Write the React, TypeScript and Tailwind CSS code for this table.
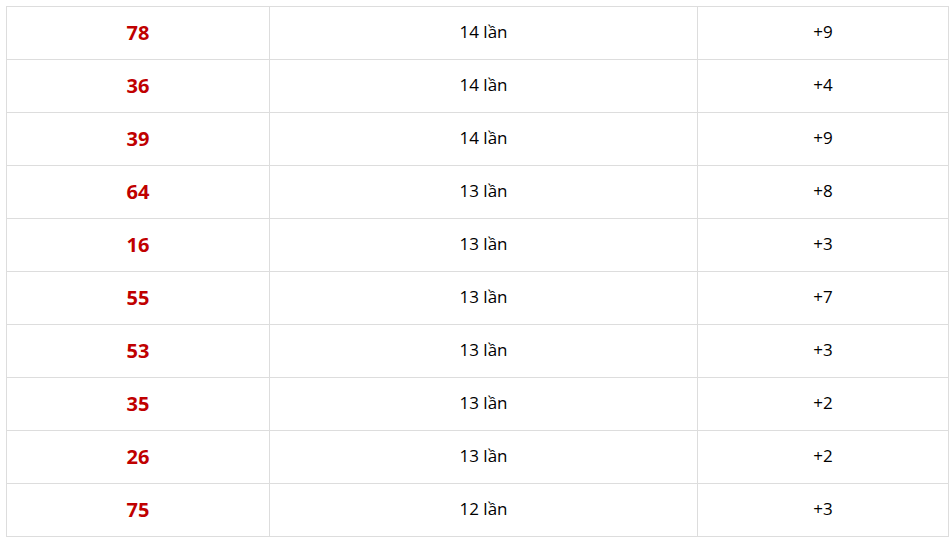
import React from "react";

const ROWS = [
  { num: "78", count: "14 lần", diff: "+9" },
  { num: "36", count: "14 lần", diff: "+4" },
  { num: "39", count: "14 lần", diff: "+9" },
  { num: "64", count: "13 lần", diff: "+8" },
  { num: "16", count: "13 lần", diff: "+3" },
  { num: "55", count: "13 lần", diff: "+7" },
  { num: "53", count: "13 lần", diff: "+3" },
  { num: "35", count: "13 lần", diff: "+2" },
  { num: "26", count: "13 lần", diff: "+2" },
  { num: "75", count: "12 lần", diff: "+3" },
];

export default function App() {
  return (
    <div className="min-h-screen bg-white pt-[6px] pl-[6px] font-['Open_Sans',sans-serif]">
      <table className="w-[942px] border-collapse table-fixed">
        <colgroup>
          <col className="w-[263px]" />
          <col className="w-[428px]" />
          <col className="w-[251px]" />
        </colgroup>
        <tbody>
          {ROWS.map((row, i) => (
            <tr key={i} className="h-[53px]">
              <td className="border border-[#dddddd] text-center align-middle text-[20px] font-bold text-[#c00000]">
                {row.num}
              </td>
              <td className="border border-[#dddddd] text-center align-middle text-[17px] text-black pb-[3px]">
                {row.count}
              </td>
              <td className="border border-[#dddddd] text-center align-middle text-[17px] text-black pb-[3px]">
                {row.diff}
              </td>
            </tr>
          ))}
        </tbody>
      </table>
    </div>
  );
}
